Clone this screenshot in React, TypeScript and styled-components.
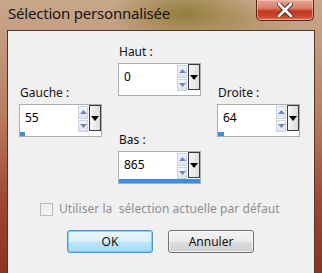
import React from 'react';
import styled, { createGlobalStyle } from 'styled-components';

const Global = createGlobalStyle`
  html, body { margin: 0; padding: 0; }
  body {
    width: 322px; height: 273px; overflow: hidden;
    font-family: "Noto Sans", "Liberation Sans", sans-serif;
  }
`;

const Window = styled.div`
  width: 322px;
  height: 273px;
  box-sizing: border-box;
  display: flex;
  flex-direction: column;
  padding: 0 7px;
  background:
    radial-gradient(ellipse 75px 30px at 185px 14px, rgba(140, 122, 50, 0.9), rgba(140, 122, 50, 0) 100%),
    radial-gradient(ellipse 50px 22px at 245px 24px, rgba(175, 145, 95, 0.6), rgba(175, 145, 95, 0) 100%),
    linear-gradient(180deg, #c8a68a 0px, #c49c80 40px, #b87a5e 120px, #a0472f 200px, #8c3220 273px);
`;

const TitleBar = styled.div`
  height: 30px;
  flex: none;
  display: flex;
  align-items: flex-start;
  justify-content: space-between;
`;

const Title = styled.div`
  padding: 3px 0 0 1px;
  font-size: 15px;
  line-height: 20px;
  color: #151515;
  letter-spacing: -0.2px;
`;

const CloseButton = styled.div`
  width: 58px;
  height: 21px;
  box-sizing: border-box;
  margin-right: 1px;
  border: 1px solid #5a2418;
  border-top: none;
  border-radius: 0 0 5px 5px;
  background: linear-gradient(180deg, #e8a595 0%, #d9806a 40%, #c23a22 55%, #c8442a 80%, #e0724f 100%);
  box-shadow: inset 0 0 0 1px rgba(255, 220, 200, 0.5);
  display: flex;
  align-items: center;
  justify-content: center;
`;

const Body = styled.div`
  flex: 1;
  background: #f0f0f0;
  border: 1px solid #4a382c;
  border-bottom: none;
  display: flex;
  flex-direction: column;
`;

const Grid = styled.div`
  display: grid;
  grid-template-columns: 83px 83px 83px;
  column-gap: 16px;
  padding: 13px 0 0 11px;
`;

const Column = styled.div<{ $top: number; $gap?: number }>`
  display: flex;
  flex-direction: column;
  padding-top: ${(p) => p.$top}px;
  gap: ${(p) => p.$gap ?? 0}px;
`;

const Field = styled.div`
  display: flex;
  flex-direction: column;
`;

const Label = styled.div`
  font-size: 12px;
  line-height: 15px;
  height: 15px;
  margin-bottom: 4px;
  padding-left: 1px;
  color: #111;
`;

const Box = styled.div`
  width: 83px;
  height: 33px;
  box-sizing: border-box;
  border: 1px solid #a9aeb6;
  background: #fff;
  display: flex;
  flex-direction: column;
`;

const InputRow = styled.div`
  display: flex;
  height: 27px;
`;

const Value = styled.div`
  flex: 1;
  font-size: 12px;
  line-height: 26px;
  padding-left: 5px;
  color: #000;
`;

const Spins = styled.div`
  width: 10px;
  display: flex;
  flex-direction: column;
  gap: 1px;
  padding-top: 1px;
  margin-right: 1px;
`;

const Spin = styled.div`
  flex: 1;
  box-sizing: border-box;
  border: 1px solid #c9d3e2;
  background: linear-gradient(180deg, #f3f6fb, #dfe6f1);
  display: flex;
  align-items: center;
  justify-content: center;
`;

const Drop = styled.div`
  width: 12px;
  height: 26px;
  box-sizing: border-box;
  border: 1px solid #3a3a3a;
  background: linear-gradient(90deg, #f6f6f6, #dcdcdc);
  display: flex;
  align-items: center;
  justify-content: center;
`;

const Track = styled.div`
  height: 4px;
  display: flex;
`;

const Fill = styled.div`
  height: 4px;
  background: #3d8ee0;
`;

const CheckRow = styled.div`
  display: flex;
  align-items: center;
  padding: 0 0 0 32px;
  margin-top: 17px;
  gap: 6px;
`;

const CheckBox = styled.div`
  width: 13px;
  height: 13px;
  box-sizing: border-box;
  border: 1px solid #b9b9b9;
  background: linear-gradient(135deg, #e8e8e8, #f8f8f8);
`;

const CheckLabel = styled.div`
  font-size: 12px;
  line-height: 16px;
  color: #8f8f8f;
  white-space: pre;
  letter-spacing: 0.05px;
`;

const Buttons = styled.div`
  display: flex;
  gap: 15px;
  padding-left: 59px;
  margin-top: 13px;
`;

const Button = styled.div<{ $primary?: boolean }>`
  width: 86px;
  height: 23px;
  box-sizing: border-box;
  border-radius: 3px;
  border: 1px solid ${(p) => (p.$primary ? '#3c9bd6' : '#707070')};
  background: ${(p) =>
    p.$primary
      ? 'linear-gradient(180deg, #eaf6fd 0%, #d9f0fc 50%, #bee6fd 51%, #a7d9f5 100%)'
      : 'linear-gradient(180deg, #f2f2f2 0%, #ebebeb 50%, #dddddd 51%, #cfcfcf 100%)'};
  box-shadow: inset 0 0 0 1px ${(p) => (p.$primary ? 'rgba(110,200,245,0.8)' : 'rgba(255,255,255,0.7)')};
  font-size: 12px;
  line-height: 21px;
  text-align: center;
  color: #111;
`;

const Up = () => (
  <svg width="7" height="4" viewBox="0 0 7 4"><path d="M0 4 L3.5 0 L7 4 Z" fill="#6f86b6" /></svg>
);
const Down = () => (
  <svg width="7" height="4" viewBox="0 0 7 4"><path d="M0 0 L3.5 4 L7 0 Z" fill="#6f86b6" /></svg>
);

const MAX = 865;

const Spinner = ({ label, value }: { label: string; value: number }) => (
  <Field>
    <Label>{label}</Label>
    <Box>
      <InputRow>
        <Value>{value}</Value>
        <Spins>
          <Spin><Up /></Spin>
          <Spin><Down /></Spin>
        </Spins>
        <Drop>
          <svg width="8" height="5" viewBox="0 0 8 5"><path d="M0 0 L4 5 L8 0 Z" fill="#000" /></svg>
        </Drop>
      </InputRow>
      <Track>
        <Fill style={{ width: `${(value / MAX) * 100}%` }} />
      </Track>
    </Box>
  </Field>
);

export default function App() {
  return (
    <>
      <Global />
      <Window>
        <TitleBar>
          <Title>Sélection personnalisée</Title>
          <CloseButton>
            <svg width="16" height="14" viewBox="0 0 16 14">
              <path d="M2 1 L14 13 M14 1 L2 13" stroke="#3a1a14" strokeWidth="4.5" strokeLinecap="round" fill="none" />
              <path d="M2 1 L14 13 M14 1 L2 13" stroke="#ffffff" strokeWidth="2.8" strokeLinecap="round" fill="none" />
            </svg>
          </CloseButton>
        </TitleBar>
        <Body>
          <Grid>
            <Column $top={41}>
              <Spinner label="Gauche :" value={55} />
            </Column>
            <Column $top={0} $gap={36}>
              <Spinner label="Haut :" value={0} />
              <Spinner label="Bas :" value={865} />
            </Column>
            <Column $top={41}>
              <Spinner label="Droite :" value={64} />
            </Column>
          </Grid>
          <CheckRow>
            <CheckBox />
            <CheckLabel>{'Utiliser la  sélection actuelle par défaut'}</CheckLabel>
          </CheckRow>
          <Buttons>
            <Button $primary>OK</Button>
            <Button>Annuler</Button>
          </Buttons>
        </Body>
      </Window>
    </>
  );
}
